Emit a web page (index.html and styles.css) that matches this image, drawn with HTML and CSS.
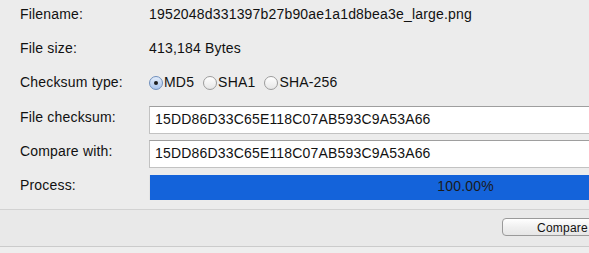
FILE: index.html
```html
<!DOCTYPE html>
<html>
<head>
<meta charset="utf-8">
<link rel="stylesheet" href="styles.css">
</head>
<body>
<div class="window">
  <div class="form">
    <div class="row text-row">
      <div class="label">Filename:</div>
      <div class="value">1952048d331397b27b90ae1a1d8bea3e_large.png</div>
    </div>
    <div class="row text-row">
      <div class="label">File size:</div>
      <div class="value">413,184 Bytes</div>
    </div>
    <div class="row text-row radio-row">
      <div class="label">Checksum type:</div>
      <div class="radios">
        <label class="radio"><span class="dot checked"></span>MD5</label>
        <label class="radio"><span class="dot"></span>SHA1</label>
        <label class="radio"><span class="dot"></span>SHA-256</label>
      </div>
    </div>
    <div class="row field-row">
      <div class="label">File checksum:</div>
      <div class="field">15DD86D33C65E118C07AB593C9A53A66</div>
    </div>
    <div class="row field-row second-field">
      <div class="label">Compare with:</div>
      <div class="field">15DD86D33C65E118C07AB593C9A53A66</div>
    </div>
    <div class="row progress-row">
      <div class="label">Process:</div>
      <div class="progress">100.00%</div>
    </div>
  </div>
  <div class="footer">
    <button class="btn">Compare</button>
  </div>
  <div class="bottom"></div>
</div>
</body>
</html>
```
FILE: styles.css
```css
html, body {
  margin: 0;
  padding: 0;
  width: 589px;
  height: 253px;
  overflow: hidden;
  background: #ececec;
  font-family: "Liberation Sans", Arial, sans-serif;
  font-size: 14px;
  line-height: 17px;
  letter-spacing: 0.18px;
  color: #111;
}
.window {
  width: 589px;
  height: 253px;
  overflow: hidden;
}
.form {
  border-bottom: 1px solid #d2d2d2;
  padding-top: 6px;
  box-sizing: border-box;
  height: 210px;
}
.row {
  display: flex;
  align-items: flex-start;
  padding-left: 20px;
}
.label {
  width: 129px;
  flex: none;
}
.text-row {
  height: 34px;
}
.radio-row {
  height: 32px;
}
.value {
  white-space: nowrap;
}
.radios {
  display: flex;
  align-items: center;
  height: 17px;
}
.radio {
  display: flex;
  align-items: center;
  margin-right: 9px;
  white-space: nowrap;
}
.dot {
  width: 14px;
  height: 14px;
  box-sizing: border-box;
  border-radius: 50%;
  border: 1px solid #9c9c9c;
  background: linear-gradient(#ffffff, #e6e6e6);
  margin-right: 1px;
  position: relative;
  flex: none;
}
.dot.checked {
  border-color: #6f8fbd;
  background: linear-gradient(#e2ecfa, #a9c4ec);
}
.dot.checked::after {
  content: "";
  position: absolute;
  width: 4px;
  height: 4px;
  border-radius: 50%;
  background: #1d1d1d;
  left: 4px;
  top: 4px;
}
.second-field {
  margin-top: 6px;
}
.field-row .label {
  padding-top: 3px;
}
.field {
  flex: none;
  width: 632px;
  height: 28px;
  box-sizing: border-box;
  background: #fff;
  border: 1px solid #c2c2c2;
  border-top-color: #9e9e9e;
  padding: 4px 5px;
  white-space: nowrap;
}
.progress-row {
  margin-top: 7px;
}
.progress-row .label {
  padding-top: 2px;
}
.progress {
  flex: none;
  width: 632px;
  height: 25px;
  box-sizing: border-box;
  background: #1463da;
  color: #1a1a1a;
  text-align: center;
  padding-top: 3px;
  border-left: 1px solid #e4e4e4;
}
.footer {
  height: 37px;
  box-sizing: border-box;
  background: #e9e9e9;
  border-bottom: 1px solid #cbcbcb;
  padding-top: 8px;
  padding-left: 502px;
}
.btn {
  display: block;
  width: 121px;
  height: 18px;
  box-sizing: border-box;
  border: 1px solid #9a9a9a;
  border-radius: 4px;
  background: linear-gradient(#ffffff, #f0f0f0 50%, #e6e6e6);
  font-family: "Liberation Sans", Arial, sans-serif;
  font-size: 12px;
  line-height: 14px;
  letter-spacing: 0.2px;
  color: #111;
  padding: 1px 0 0 0;
  margin: 0;
  text-align: center;
}
.bottom {
  height: 6px;
  background: #eeeeee;
}
```
